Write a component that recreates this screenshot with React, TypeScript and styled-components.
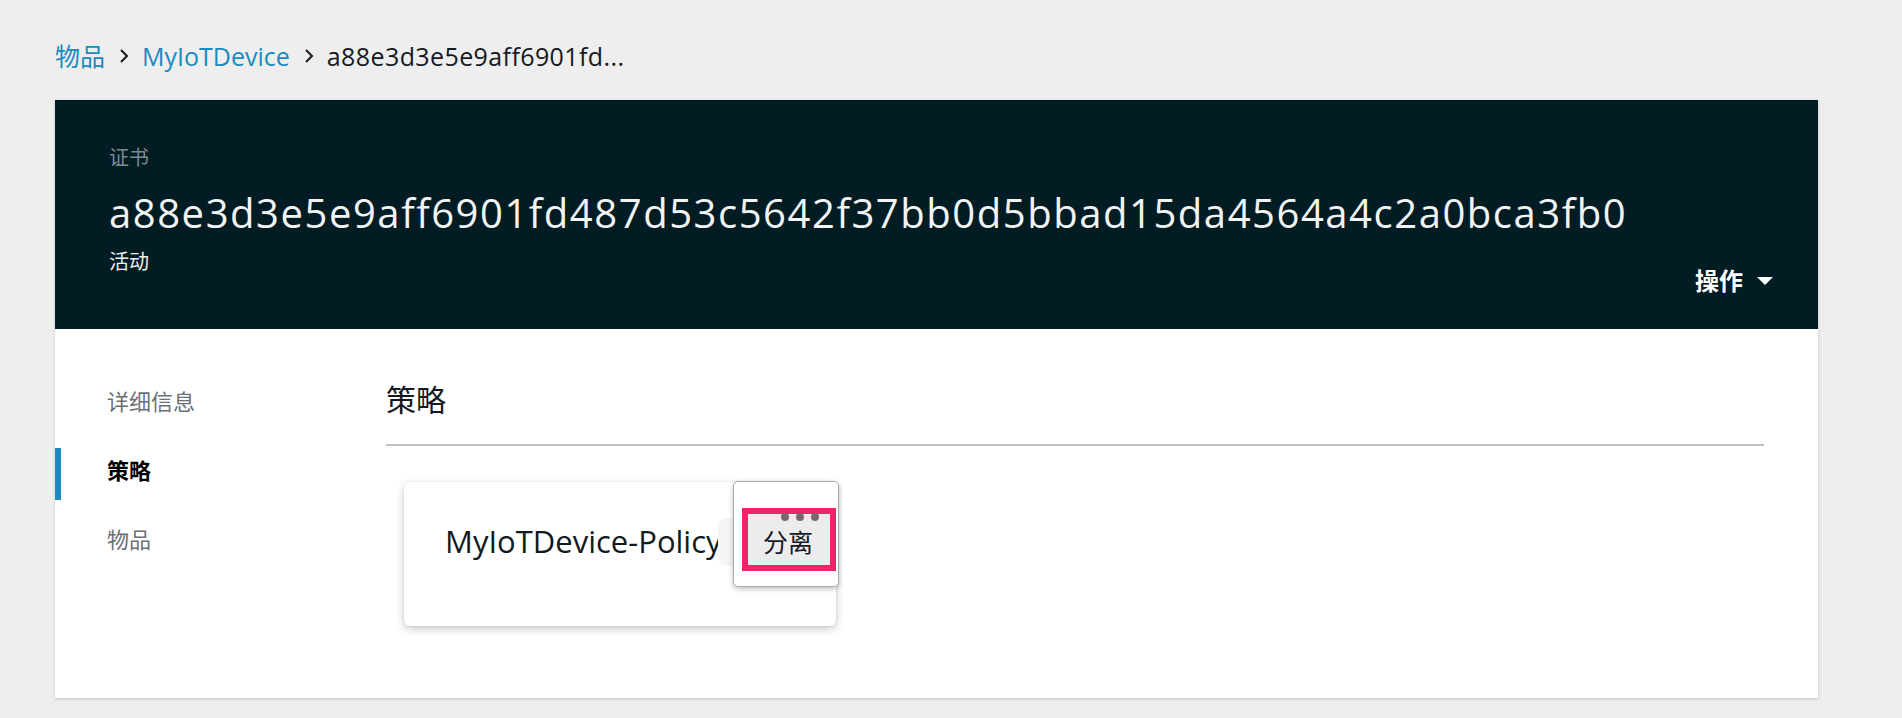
import React from 'react';
import styled, { createGlobalStyle } from 'styled-components';

const GlobalStyle = createGlobalStyle`
  html, body {
    margin: 0;
    padding: 0;
    background: #eeeeee;
  }
  body {
    font-family: "Open Sans", "Noto Sans CJK SC", sans-serif;
    color: #16191f;
  }
  * {
    box-sizing: border-box;
  }
`;

const Page = styled.div`
  width: 1902px;
  min-height: 718px;
  padding: 42px 84px 20px 55px;
`;

const Breadcrumbs = styled.nav`
  display: flex;
  align-items: center;
  height: 28px;
  font-size: 25px;
  line-height: 28px;
  margin-bottom: 30px;
`;

const Crumb = styled.span<{ $link?: boolean }>`
  color: ${({ $link }) => ($link ? '#1a8bbf' : '#16191f')};
  letter-spacing: ${({ $link }) => ($link ? '0' : '0.4px')};
  white-space: nowrap;
`;

const Chevron = styled.svg`
  width: 10px;
  height: 16px;
  margin: 0 13px 0 14px;
  flex-shrink: 0;
`;

const Panel = styled.section`
  background: #ffffff;
  box-shadow: 0 1px 3px rgba(0, 0, 0, 0.18);
`;

const Header = styled.header`
  display: flex;
  justify-content: space-between;
  align-items: flex-end;
  height: 229px;
  padding: 44px 45px 32px 54px;
  background: #021c23;
`;

const TitleBlock = styled.div`
  display: flex;
  flex-direction: column;
  margin-bottom: 21px;
`;

const Eyebrow = styled.div`
  font-size: 20px;
  line-height: 28px;
  color: #7d8a8f;
`;

const Hash = styled.h1`
  margin: 17px 0 11px;
  font-size: 40px;
  font-weight: 400;
  line-height: 48px;
  letter-spacing: 1.55px;
  color: #f2f4f4;
  white-space: nowrap;
`;

const Status = styled.div`
  font-size: 20px;
  line-height: 28px;
  color: #eef0f0;
`;

const Actions = styled.button`
  display: flex;
  align-items: center;
  gap: 14px;
  padding: 0;
  border: none;
  background: transparent;
  color: #ffffff;
  font-family: inherit;
  font-size: 24px;
  font-weight: 700;
  line-height: 32px;
  cursor: pointer;
`;

const Caret = styled.svg`
  width: 16px;
  height: 8px;
`;

const Body = styled.div`
  display: grid;
  grid-template-columns: 331px 1fr;
  height: 369px;
  padding-right: 54px;
`;

const SideNav = styled.ul`
  list-style: none;
  margin: 0;
  padding: 50px 0 0;
  display: flex;
  flex-direction: column;
  gap: 17px;
`;

const NavItem = styled.li<{ $active?: boolean }>`
  height: 52px;
  padding: 0 0 8px 46px;
  border-left: 6px solid ${({ $active }) => ($active ? '#1a8bbf' : 'transparent')};
  font-size: 22px;
  line-height: 44px;
  font-weight: ${({ $active }) => ($active ? 700 : 400)};
  color: ${({ $active }) => ($active ? '#000000' : '#6b7075')};
`;

const Content = styled.div`
  padding-top: 51px;
`;

const SectionTitle = styled.h2`
  margin: 0 0 24px;
  font-size: 30px;
  font-weight: 400;
  line-height: 40px;
  color: #16191f;
`;

const Divider = styled.hr`
  margin: 0;
  border: none;
  height: 2px;
  background: #c0c0c0;
`;

const Card = styled.div`
  position: relative;
  width: 432px;
  height: 144px;
  margin: 36px 0 0 18px;
  padding: 40px 0 0 41px;
  border-radius: 6px;
  background: #ffffff;
  box-shadow: 0 3px 8px rgba(0, 0, 0, 0.22), 0 0 2px rgba(0, 0, 0, 0.1);
`;

const CardTitle = styled.div`
  font-size: 31px;
  line-height: 38px;
  color: #0f1b1f;
`;

const MoreButtonBg = styled.div`
  position: absolute;
  left: 314px;
  top: 36px;
  width: 100px;
  height: 48px;
  border-radius: 8px;
  background: #f4f5f5;
`;

const Menu = styled.div`
  position: absolute;
  left: 329px;
  top: -1px;
  width: 106px;
  height: 106px;
  border: 1px solid #a9adb0;
  border-radius: 5px;
  background: #ffffff;
  box-shadow: 0 2px 5px rgba(0, 0, 0, 0.25);
`;

const Dots = styled.div`
  position: absolute;
  top: 31px;
  left: 47px;
  display: flex;
  gap: 7px;
  z-index: 1;
`;

const Dot = styled.span`
  width: 8px;
  height: 8px;
  border-radius: 50%;
  background: #6e6e6e;
`;

const MenuItem = styled.div`
  position: absolute;
  left: 8px;
  top: 26px;
  width: 94px;
  height: 63px;
  display: flex;
  align-items: center;
  justify-content: center;
  padding: 4px 2px 0 0;
  background: #ececec;
  font-size: 25px;
  line-height: 32px;
  color: #16191f;

  &::after {
    content: '';
    position: absolute;
    inset: 0;
    border: 6px solid #f0246b;
    z-index: 2;
  }
`;

const ChevronIcon = () => (
  <Chevron viewBox="0 0 10 16">
    <path d="M2 2 L8 8 L2 14" fill="none" stroke="#16191f" strokeWidth="2" />
  </Chevron>
);

const App: React.FC = () => {
  return (
    <>
      <GlobalStyle />
      <Page>
        <Breadcrumbs>
          <Crumb $link>物品</Crumb>
          <ChevronIcon />
          <Crumb $link>MyIoTDevice</Crumb>
          <ChevronIcon />
          <Crumb>a88e3d3e5e9aff6901fd...</Crumb>
        </Breadcrumbs>

        <Panel>
          <Header>
            <TitleBlock>
              <Eyebrow>证书</Eyebrow>
              <Hash>a88e3d3e5e9aff6901fd487d53c5642f37bb0d5bbad15da4564a4c2a0bca3fb0</Hash>
              <Status>活动</Status>
            </TitleBlock>
            <Actions>
              操作
              <Caret viewBox="0 0 16 8">
                <path d="M0 0 H16 L8 8 Z" fill="#ffffff" />
              </Caret>
            </Actions>
          </Header>

          <Body>
            <SideNav>
              <NavItem>详细信息</NavItem>
              <NavItem $active>策略</NavItem>
              <NavItem>物品</NavItem>
            </SideNav>

            <Content>
              <SectionTitle>策略</SectionTitle>
              <Divider />
              <Card>
                <CardTitle>MyIoTDevice-Policy</CardTitle>
                <MoreButtonBg />
                <Menu>
                  <Dots>
                    <Dot />
                    <Dot />
                    <Dot />
                  </Dots>
                  <MenuItem>分离</MenuItem>
                </Menu>
              </Card>
            </Content>
          </Body>
        </Panel>
      </Page>
    </>
  );
};

export default App;
